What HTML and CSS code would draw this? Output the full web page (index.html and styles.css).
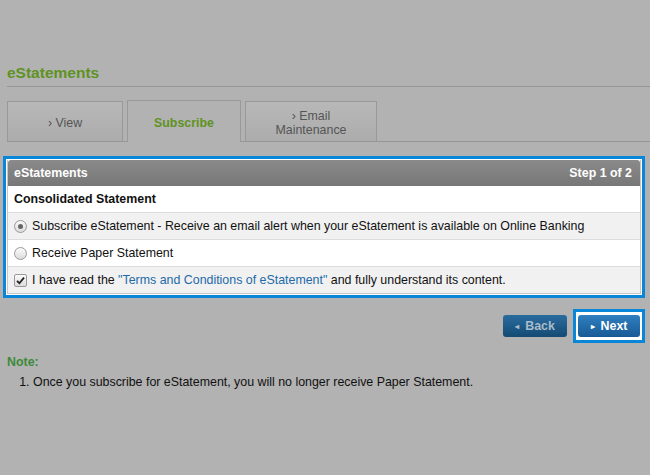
FILE: index.html
```html
<!DOCTYPE html>
<html>
<head>
<meta charset="utf-8">
<link rel="stylesheet" href="styles.css">
</head>
<body>
<div class="page">
  <h1 class="title">eStatements</h1>
  <div class="tabs">
    <div class="tab">› View</div>
    <div class="tab active">Subscribe</div>
    <div class="tab wide">› Email<br>Maintenance</div>
  </div>
  <div class="focus">
    <div class="panel">
      <div class="phead"><span>eStatements</span><span>Step 1 of 2</span></div>
      <div class="row bold">Consolidated Statement</div>
      <div class="row alt"><span class="radio on"></span><span>Subscribe eStatement - Receive an email alert when your eStatement is available on Online Banking</span></div>
      <div class="row"><span class="radio"></span><span>Receive Paper Statement</span></div>
      <div class="row alt"><span class="check"><svg width="9" height="9" viewBox="0 0 9 9"><path d="M1 4.8 L3.4 7.2 L8 1.6" fill="none" stroke="#222" stroke-width="1.8"/></svg></span><span>I have read the <a class="link">"Terms and Conditions of eStatement"</a> and fully understand its content.</span></div>
    </div>
  </div>
  <div class="actions">
    <div class="btn dim"><span class="tri">◂</span>Back</div>
    <div class="btnwrap"><div class="btn"><span class="tri">▸</span>Next</div></div>
  </div>
  <div class="note">Note:</div>
  <ol class="notes">
    <li>Once you subscribe for eStatement, you will no longer receive Paper Statement.</li>
  </ol>
</div>
</body>
</html>
```
FILE: styles.css
```css
html, body { margin: 0; padding: 0; }
body {
  background: #b2b2b2;
  font-family: "Liberation Sans", Arial, sans-serif;
  font-size: 12.4px;
  color: #111;
  width: 650px;
  height: 475px;
  overflow: hidden;
}
.page { padding: 63px 0 0 0; }
.title {
  margin: 0 0 0 7px;
  font-size: 15.5px;
  font-weight: bold;
  color: #5f9222;
  height: 23px;
  line-height: 20px;
  border-bottom: 1px solid #969696;
}
.tabs {
  display: flex;
  gap: 4px;
  margin: 14px 0 0 7px;
  border-bottom: 1px solid #969696;
  height: 40px;
  align-items: flex-end;
}
.tab {
  width: 114px;
  height: 36px;
  padding-top: 3px;
  border: 1px solid #999;
  border-bottom: none;
  background: linear-gradient(#b8b8b8, #acacac);
  color: #555;
  display: flex;
  align-items: center;
  justify-content: center;
  text-align: center;
  line-height: 14px;
}
.tab.active {
  width: 112px;
  height: 38px;
  margin-bottom: -1px;
  background: #b2b2b2;
  color: #5f9222;
  font-weight: bold;
}
.tab.wide { width: 130px; }
.focus {
  margin: 14px 5px 0 3px;
  border: 3px solid #0a86d9;
  padding: 1px;
  background: #fff;
}
.panel {
  border: 1px solid #c8c8c8;
  border-top: none;
}
.phead {
  height: 26px;
  border-radius: 3px 3px 0 0;
  background: linear-gradient(#8a8a8a, #777);
  color: #fff;
  font-weight: bold;
  display: flex;
  justify-content: space-between;
  align-items: center;
  padding: 0 8px 0 6px;
}
.row {
  height: 26px;
  display: flex;
  align-items: center;
  padding: 0 6px;
  border-top: 1px solid #dcdcdc;
  background: #fff;
  white-space: nowrap;
}
.row.alt { background: #f1f1f1; }
.row.bold { font-weight: bold; border-top: none; }
.radio {
  width: 11px; height: 11px;
  border-radius: 50%;
  border: 1px solid #999;
  background: linear-gradient(#fafafa, #dcdcdc);
  margin-right: 5px;
  flex: none;
  position: relative;
}
.radio.on::after {
  content: "";
  position: absolute;
  left: 3px; top: 3px;
  width: 5px; height: 5px;
  border-radius: 50%;
  background: #666;
}
.check {
  width: 11px; height: 11px;
  border: 1px solid #999;
  border-radius: 2px;
  background: linear-gradient(#fafafa, #dcdcdc);
  margin-right: 5px;
  flex: none;
  display: flex;
  align-items: center;
  justify-content: center;
}
.link { color: #1e6aa8; }
.actions {
  display: flex;
  justify-content: flex-end;
  align-items: center;
  gap: 6px;
  margin: 11px 5px 0 0;
}
.btn {
  width: 62px;
  height: 22px;
  border-radius: 3px;
  background: linear-gradient(#2f7fc0, #185a96);
  color: #fff;
  font-weight: bold;
  display: flex;
  align-items: center;
  justify-content: center;
}
.tri { font-size: 8px; margin-right: 6px; }
.btn.dim {
  width: 64px;
  background: linear-gradient(#2a6c9e, #144a74);
  color: #a9bccb;
}
.btnwrap {
  border: 3px solid #0a86d9;
  padding: 3px 2px;
  background: #fff;
}
.note {
  margin: 12px 0 0 7px;
  color: #3c8a3a;
  font-weight: bold;
}
.notes {
  margin: 6px 0 0 0;
  padding-left: 33px;
}
.notes li { line-height: 14px; }
```
